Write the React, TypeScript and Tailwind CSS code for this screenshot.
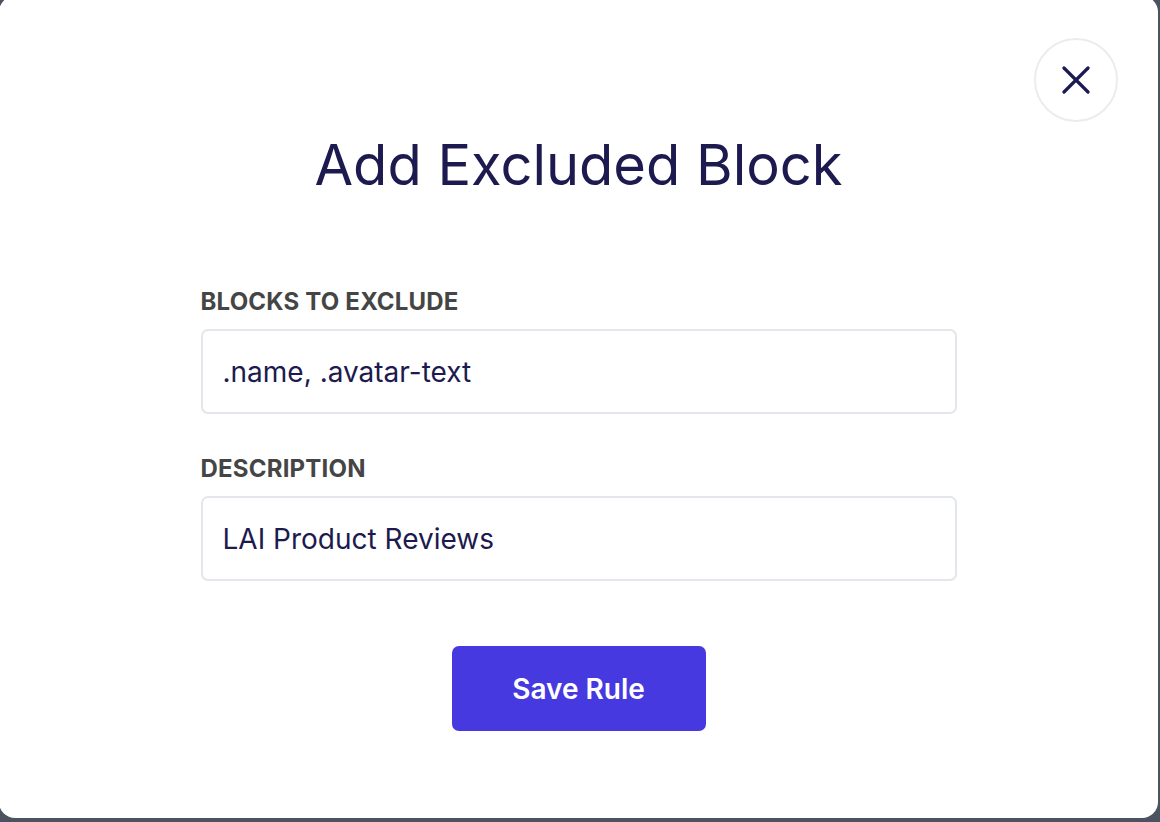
import React from 'react';

function CloseIcon() {
  return (
    <svg width="28" height="28" viewBox="0 0 28 28" fill="none" stroke="#1c1a4e" strokeWidth="3.2" strokeLinecap="round">
      <path d="M2 2L26 26" />
      <path d="M26 2L2 26" />
    </svg>
  );
}

interface FieldProps {
  label: string;
  value: string;
}

function Field({ label, value }: FieldProps) {
  return (
    <div className="flex flex-col">
      <label className="text-[24px] leading-[24px] font-bold tracking-[0.2px] text-[#454545] uppercase">{label}</label>
      <div className="mt-[15px] h-[85px] rounded-[7px] border-2 border-[#e3e6ea] flex items-center px-[20px] text-[28px] text-[#1c1a4e]">
        {value}
      </div>
    </div>
  );
}

export default function App() {
  return (
    <div className="w-[1160px] h-[822px] overflow-hidden bg-[#4b5260]" style={{ fontFamily: 'Inter, "Noto Sans", sans-serif' }}>
      <div className="relative -ml-px -mt-1 w-[1159px] h-[822px] rounded-[16px] bg-white flex flex-col items-center">
        <button className="absolute right-[40px] top-[42px] w-[84px] h-[84px] rounded-full border-2 border-[#ececf0] flex items-center justify-center">
          <CloseIcon />
        </button>

        <h1 className="mt-[134px] text-[56px] leading-[70px] text-[#1c1a4e] font-normal">Add Excluded Block</h1>

        <div className="mt-[90px] w-[756px] flex flex-col gap-[43px]">
          <Field label="Blocks to exclude" value=".name, .avatar-text" />
          <Field label="Description" value="LAI Product Reviews" />
        </div>

        <button className="mt-[65px] w-[254px] h-[85px] rounded-[7px] bg-[#4739e0] text-white text-[28px] font-semibold">
          Save Rule
        </button>
      </div>
    </div>
  );
}
